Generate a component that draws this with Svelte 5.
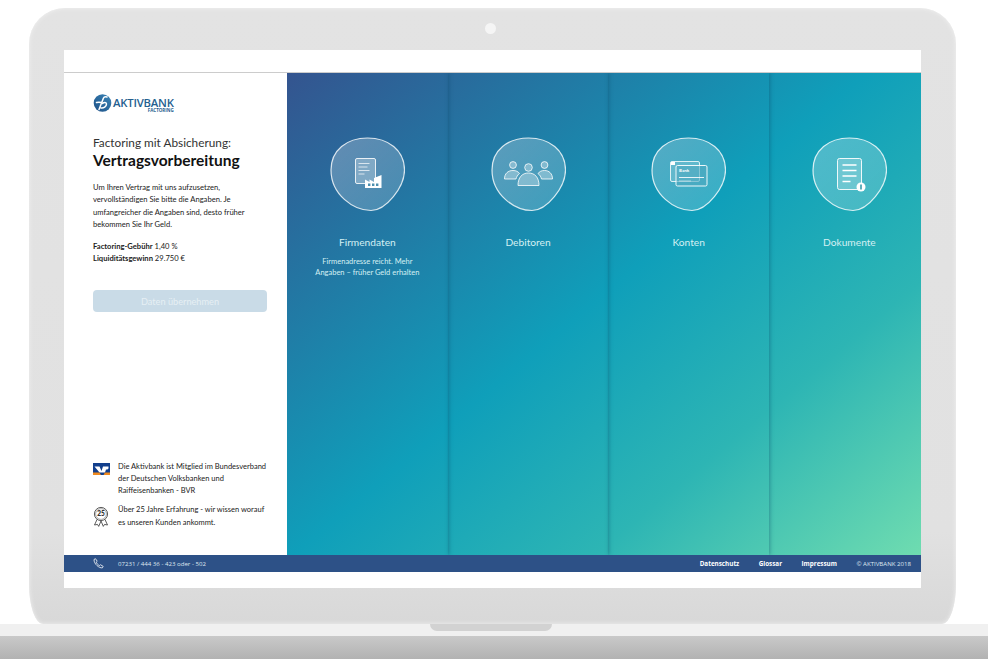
<script>
  const blob = 'M37.5 1C58 1 74.500 13 74.500 33 74.500 50 56 73.500 41 73.500 24 73.500 1 58 1 33 1 13 17 1 37.500 1Z';
  const steps = [
    { id: 'firm', title: 'Firmendaten', hint: 'Firmenadresse reicht. Mehr Angaben – früher Geld erhalten' },
    { id: 'people', title: 'Debitoren' },
    { id: 'bank', title: 'Konten' },
    { id: 'docs', title: 'Dokumente' }
  ];
</script>

<div class="laptop">
  <div class="lid">
    <span class="camera"></span>
    <div class="screen">
      <div class="app">
        <div class="main">
          <aside class="side">
            <div class="logo">
              <svg width="19" height="18" viewBox="0 0 19 18">
                <defs>
                  <linearGradient id="logo-fill" x1="1" y1="0" x2="0" y2="1">
                    <stop offset="0" stop-color="#3a86b8" />
                    <stop offset="1" stop-color="#1d4f86" />
                  </linearGradient>
                </defs>
                <circle cx="9.500" cy="9" r="8.800" fill="url(#logo-fill)" />
                <path d="M6 15.500 10.500 4C11 2.800 12.500 2.500 14 3M9.500 9.500c1.500-1.500 4-1.500 4 .5 0 2.500-3 4.500-5.500 4M3.500 8.500c1.500-.5 3-.5 5.500 0" fill="none" stroke="#fff" stroke-width="1.500" stroke-linecap="round" />
              </svg>
              <div class="logo-text">
                <span class="logo-name">AKTIVBANK</span>
                <span class="logo-sub">FACTORING</span>
              </div>
            </div>

            <h1>Factoring mit Absicherung:<strong>Vertragsvorbereitung</strong></h1>

            <p class="intro">Um Ihren Vertrag mit uns aufzusetzen, vervollständigen Sie bitte die Angaben. Je umfangreicher die Angaben sind, desto früher bekommen Sie Ihr Geld.</p>

            <p class="facts"><b>Factoring-Gebühr</b> 1,40 %<br /><b>Liquiditätsgewinn</b> 29.750 €</p>

            <button class="submit" disabled>Daten übernehmen</button>

            <div class="notes">
              <div class="note">
                <svg class="note-icon" width="17" height="12" viewBox="0 0 17 12">
                  <rect width="17" height="12" fill="#123f8c" />
                  <path d="M1.500 3.500h5L8.500 8 10 3.500h5.500v1.500c0 1-1 1.500-2.500 1.500L12 9.500H6.500z" fill="#fff" />
                  <path d="M0 9.500h6.500L8 12H0zM17 9.500h-5L10.500 12H17z" fill="#f08a1d" />
                </svg>
                <p>Die Aktivbank ist Mitglied im Bundesverband der Deutschen Volksbanken und Raiffeisenbanken - BVR</p>
              </div>
              <div class="note">
                <svg class="note-icon" width="17" height="22" viewBox="0 0 17 22" fill="none" stroke="#333" stroke-width=".8">
                  <circle cx="8" cy="8" r="6.600" />
                  <circle cx="8" cy="8" r="5.400" stroke-width=".4" />
                  <path d="M4 13.500 1.500 19l3-.6 1.200 2L8 15l2.300 5.400 1.200-2 3 .6L12 13.500" />
                  <text x="8" y="10.200" text-anchor="middle" class="seal">25</text>
                </svg>
                <p>Über 25 Jahre Erfahrung - wir wissen worauf es unseren Kunden ankommt.</p>
              </div>
            </div>
          </aside>

          <section class="steps">
            {#each steps as step}
              <div class="step">
                <div class="badge">
                  <svg width="75" height="75" viewBox="0 0 75 75">
                    <defs>
                      <linearGradient id="fill-{step.id}" x1="0" y1="0" x2="1" y2="1">
                        <stop offset="0" stop-color="#fff" stop-opacity=".26" />
                        <stop offset="1" stop-color="#fff" stop-opacity=".16" />
                      </linearGradient>
                    </defs>
                    <path d={blob} fill="url(#fill-{step.id})" stroke="#fff" stroke-opacity=".8" stroke-width="1.200" />

                    {#if step.id === 'firm'}
                      <rect x="25.500" y="21.500" width="20" height="25" rx="1.500" fill="#fff" fill-opacity=".25" stroke="#fff" stroke-opacity=".85" />
                      <path d="M28.500 26.500h11M28.500 30h9M28.500 33.500h11M28.500 37h6" stroke="#fff" stroke-opacity=".7" />
                      <path d="M35 51V42.500l4.500 2.500v-2.500L44 45v-4l7.500-3v13z" fill="#fff" />
                      <path d="M38 46.500h2.400v2.400H38zM42 46.500h2.400v2.400H42zM46 46.500h2.400v2.400H46z" fill="#4d8fae" />
                    {:else if step.id === 'people'}
                      <g fill="#fff" fill-opacity=".3" stroke="#fff" stroke-opacity=".8" stroke-width="1">
                        <circle cx="22" cy="28" r="3.400" />
                        <path d="M13.500 42c0-5.500 3.500-8.500 8.500-8.500 3 0 5 1 6.500 3-2 1.500-3 3.500-3.500 5.500z" />
                        <circle cx="53.500" cy="28" r="3.400" />
                        <path d="M61.500 42c0-5.500-3.500-8.500-8-8.500-3 0-5 1-6.500 3 2 1.500 3 3.500 3.500 5.500z" />
                        <circle cx="37.500" cy="30.500" r="3.800" />
                        <path d="M27 48.500c0-8 4-12.500 10.500-12.500S48 40.500 48 48.500z" />
                      </g>
                    {:else if step.id === 'bank'}
                      <rect x="19.500" y="24.500" width="29" height="20" rx="1.500" fill="#fff" fill-opacity=".15" stroke="#fff" stroke-opacity=".8" />
                      <rect x="25" y="28.500" width="31" height="20.500" rx="1.500" fill="#4fa9bf" fill-opacity=".6" stroke="#fff" stroke-opacity=".9" />
                      <path d="M20 26.500h4" stroke="#fff" stroke-width="3" />
                      <text x="28" y="34.500" class="bank-label">Bank</text>
                      <path d="M28 40.500h25" stroke="#fff" stroke-opacity=".85" />
                      <path d="M28 44h12" stroke="#fff" stroke-opacity=".5" />
                    {:else}
                      <rect x="25.500" y="21.500" width="24" height="31" rx="2" fill="#fff" fill-opacity=".2" stroke="#fff" stroke-opacity=".9" />
                      <path d="M30.500 28h14M30.500 33.500h14M30.500 39h14M30.500 44.500h8" stroke="#fff" stroke-width="1.400" />
                      <circle cx="49" cy="50" r="4.500" fill="#fff" />
                      <path d="M49 47.500v5" stroke="#4fa8b5" stroke-width="1.800" />
                    {/if}
                  </svg>
                </div>
                <h2>{step.title}</h2>
                {#if step.hint}
                  <p>{step.hint}</p>
                {/if}
              </div>
            {/each}
          </section>
        </div>

        <footer>
          <div class="contact">
            <svg width="11" height="11" viewBox="0 0 11 11" fill="none" stroke="#fff" stroke-width=".8">
              <path d="M1 1.500 2.500.7 4.200 3.300 3.200 4.200c.6 1.400 1.800 2.700 3.300 3.400l.9-.9 2.800 1.700-.8 1.400C6.500 10.500.8 6 1 1.500z" />
            </svg>
            <span>07231 / 444 36 - 423 oder - 502</span>
          </div>
          <nav>
            <b>Datenschutz</b>
            <b>Glossar</b>
            <b>Impressum</b>
            <span>© AKTIVBANK 2018</span>
          </nav>
        </footer>
      </div>
    </div>
  </div>
  <div class="base">
    <span class="notch"></span>
  </div>
</div>

<style>
  :global(body) {
    background: #fff;
  }

  .laptop {
    width: 988px;
    height: 666px;
    padding-top: 8px;
    box-sizing: border-box;
    overflow: hidden;
    font-family: Lato, sans-serif;
  }

  .lid {
    position: relative;
    width: 927px;
    height: 616px;
    margin-left: 29px;
    box-sizing: border-box;
    padding: 42px 35px 36px;
    border-radius: 36px 36px 14px 14px / 36px 36px 40px 40px;
    background: linear-gradient(#e3e3e3 0%, #e1e1e1 85%, #d8d8d8 100%);
    box-shadow: inset 0 0 4px #f2f2f2;
  }

  .camera {
    position: absolute;
    top: 15px;
    left: 456px;
    width: 11px;
    height: 11px;
    border-radius: 50%;
    background: #f5f5f5;
  }

  .screen {
    height: 538px;
    box-sizing: border-box;
    padding: 22px 0 16px;
    background: #fff;
  }

  .app {
    display: flex;
    flex-direction: column;
    height: 500px;
    border-top: 1px solid #ccc;
    box-sizing: border-box;
  }

  .main {
    display: flex;
    flex: 1;
    min-height: 0;
  }

  .side {
    display: flex;
    flex-direction: column;
    width: 223px;
    box-sizing: border-box;
    padding: 21px 20px 0 29px;
    color: #222;
  }

  .logo {
    display: flex;
    align-items: center;
    gap: 1px;
    height: 18px;
  }

  .logo-text {
    display: flex;
    flex-direction: column;
    gap: 1px;
    margin-top: 5px;
  }

  .logo-name {
    font-family: "Open Sans", sans-serif;
    font-size: 11.300px;
    font-weight: 600;
    line-height: 9px;
    color: #24608f;
    letter-spacing: -.2px;
  }

  .logo-sub {
    align-self: flex-end;
    font-family: "Open Sans", sans-serif;
    font-size: 4.500px;
    font-weight: 700;
    line-height: 5px;
    color: #24608f;
  }

  h1 {
    margin: 22px 0 0;
    font-size: 11.800px;
    font-weight: 400;
    line-height: 17px;
    color: #333;
  }

  h1 strong {
    display: block;
    font-size: 15.500px;
    font-weight: 700;
    line-height: 18px;
    color: #111;
  }

  .intro,
  .facts {
    font-size: 7.600px;
    line-height: 12.400px;
  }

  .intro {
    margin: 12px 0 0;
  }

  .facts {
    margin: 9px 0 0;
  }

  .submit {
    width: 174px;
    height: 22px;
    margin-top: 26px;
    padding: 0;
    border: 0;
    border-radius: 4px;
    background: #c9dbe7;
    color: #e6eff4;
    font-family: inherit;
    font-size: 9.200px;
  }

  .notes {
    display: flex;
    flex-direction: column;
    gap: 7px;
    margin-top: auto;
    padding-bottom: 26px;
  }

  .note {
    display: flex;
    gap: 8px;
  }

  .note-icon {
    flex: none;
    margin-top: 2px;
  }

  .note p {
    margin: 0;
    font-size: 7.500px;
    line-height: 12.300px;
  }

  .seal {
    font-size: 6.500px;
    font-weight: 800;
    fill: #333;
    stroke: none;
  }

  .steps {
    display: grid;
    flex: 1;
    grid-template-columns: repeat(4, 160.700px);
    overflow: hidden;
    background: linear-gradient(140deg, #34548f 0%, #0f9fba 48%, #2db5b4 73%, #6fdcb0 100%);
  }

  .step {
    padding-top: 64px;
    box-shadow: 1px 0 4px rgba(10, 70, 100, .4);
    text-align: center;
    color: #d4f0f3;
  }

  .step:last-child {
    box-shadow: none;
  }

  .badge {
    display: flex;
    justify-content: center;
  }

  .bank-label {
    font-size: 4.500px;
    font-weight: 700;
    fill: #fff;
  }

  .step h2 {
    margin: 24px 0 0;
    font-size: 10.200px;
    font-weight: 400;
    line-height: 13px;
  }

  .step p {
    width: 114px;
    margin: 7px auto 0;
    font-size: 7.500px;
    line-height: 11px;
  }

  footer {
    display: flex;
    flex: none;
    align-items: center;
    justify-content: space-between;
    height: 17px;
    padding: 0 10px 0 29px;
    background: #2d5187;
    color: #dfe7f0;
    font-family: "Open Sans", sans-serif;
    font-size: 6.100px;
  }

  .contact {
    display: flex;
    align-items: center;
    gap: 14px;
  }

  nav {
    display: flex;
    gap: 19.500px;
  }

  nav b {
    color: #fff;
    font-size: 6.300px;
  }

  .base {
    position: relative;
    height: 42px;
    background: linear-gradient(#f0f0f0 0, #f0f0f0 12px, #c9c9c9 12px, #b2b2b2 35px, #fff 35px);
  }

  .notch {
    position: absolute;
    top: 0;
    left: 430px;
    width: 122px;
    height: 7px;
    border-radius: 0 0 12px 12px;
    background: #d2d2d2;
  }
</style>
